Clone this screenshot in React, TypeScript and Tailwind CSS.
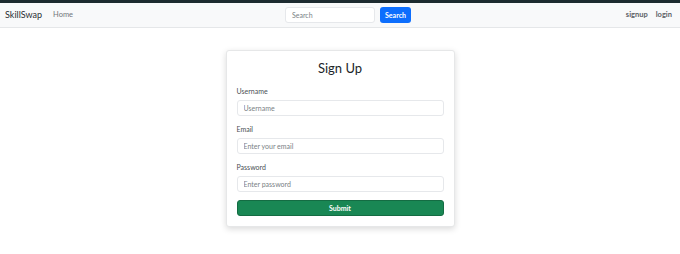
export default function App() {
  const inputCls =
    'h-[16px] w-full rounded-[3px] border border-[#e6e8eb] px-[6px] text-[7px] outline-none placeholder:text-[#7a7f85]'
  const labelCls = 'mb-[4px] text-[7px] leading-[10px] text-[#4a4f54]'
  return (
    <div className="min-h-screen bg-white font-['Lato',sans-serif] text-[#212529]">
      <nav className="border-t-[3px] border-[#1c2b30]">
        <div className="flex h-[25px] items-center border-b border-[#e5e7e9] bg-[#f8f9fa] px-[5px]">
          <div className="flex w-[280px] items-center gap-[11px]">
            <span className="text-[9px] text-[#2a2e32]">SkillSwap</span>
            <span className="text-[7.5px] text-[#73777b]">Home</span>
          </div>
          <form className="flex items-center gap-[5px]">
            <input
              placeholder="Search"
              className="h-[16px] w-[90px] rounded-[3px] border border-[#e6e8eb] bg-white px-[6px] text-[7px] outline-none placeholder:text-[#7a7f85]"
            />
            <button
              type="button"
              className="h-[16px] w-[31px] rounded-[3px] bg-[#0d6efd] text-[7px] font-bold text-white"
            >
              Search
            </button>
          </form>
          <div className="ml-auto flex items-center gap-[8px] pr-[3px] text-[7.5px] font-bold text-[#5c6166]">
            <span>signup</span>
            <span>login</span>
          </div>
        </div>
      </nav>

      <div className="flex justify-center pt-[22px]">
        <div className="w-[229px] rounded-[3px] border border-[#e6e7e8] bg-white px-[10px] pt-[8px] pb-[10px] shadow-[0_2px_6px_rgba(0,0,0,0.15)]">
          <h2 className="mb-[9px] text-center text-[13px] leading-[18px] text-[#212529]">Sign Up</h2>
          <form className="flex flex-col">
            <label className={labelCls}>Username</label>
            <input placeholder="Username" className={`mb-[8px] ${inputCls}`} />
            <label className={labelCls}>Email</label>
            <input placeholder="Enter your email" className={`mb-[8px] ${inputCls}`} />
            <label className={labelCls}>Password</label>
            <input placeholder="Enter password" className={`mb-[8px] ${inputCls}`} />
            <button
              type="button"
              className="h-[16px] w-full rounded-[3px] border border-[#146c43] bg-[#198754] text-[7px] font-bold text-white"
            >
              Submit
            </button>
          </form>
        </div>
      </div>
    </div>
  )
}
